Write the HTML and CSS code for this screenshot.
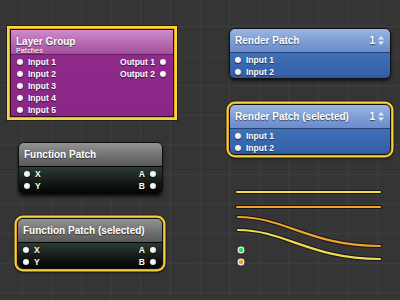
FILE: index.html
```html
<!DOCTYPE html>
<html>
<head>
<meta charset="utf-8">
<link rel="stylesheet" href="styles.css">
</head>
<body>
<div class="canvas">
  <div class="node purple sel-square n-layer">
    <div class="head">
      <div class="title">Layer Group</div>
      <div class="sub">Patches</div>
    </div>
    <div class="body">
      <ul class="ports in">
        <li><span class="dot"></span>Input 1</li>
        <li><span class="dot"></span>Input 2</li>
        <li><span class="dot"></span>Input 3</li>
        <li><span class="dot"></span>Input 4</li>
        <li><span class="dot"></span>Input 5</li>
      </ul>
      <ul class="ports out">
        <li>Output 1<span class="dot"></span></li>
        <li>Output 2<span class="dot"></span></li>
      </ul>
    </div>
  </div>

  <div class="node blue n-render">
    <div class="head row">
      <div class="title">Render Patch</div>
      <div class="count">1 <svg class="updown" width="6" height="9" viewBox="0 0 6 9"><path d="M3 0 L6 3.6 L0 3.6 Z M3 9 L6 5.4 L0 5.4 Z"/></svg></div>
    </div>
    <div class="body">
      <ul class="ports in">
        <li><span class="dot"></span>Input 1</li>
        <li><span class="dot"></span>Input 2</li>
      </ul>
    </div>
  </div>

  <div class="node blue selected n-render-sel">
    <div class="head row">
      <div class="title">Render Patch (selected)</div>
      <div class="count">1 <svg class="updown" width="6" height="9" viewBox="0 0 6 9"><path d="M3 0 L6 3.6 L0 3.6 Z M3 9 L6 5.4 L0 5.4 Z"/></svg></div>
    </div>
    <div class="body">
      <ul class="ports in">
        <li><span class="dot"></span>Input 1</li>
        <li><span class="dot"></span>Input 2</li>
      </ul>
    </div>
  </div>

  <div class="node gray n-func">
    <div class="head row">
      <div class="title">Function Patch</div>
    </div>
    <div class="body">
      <ul class="ports in">
        <li><span class="dot"></span>X</li>
        <li><span class="dot"></span>Y</li>
      </ul>
      <ul class="ports out">
        <li>A<span class="dot"></span></li>
        <li>B<span class="dot"></span></li>
      </ul>
    </div>
  </div>

  <div class="node gray selected n-func-sel">
    <div class="head row">
      <div class="title">Function Patch (selected)</div>
    </div>
    <div class="body">
      <ul class="ports in">
        <li><span class="dot"></span>X</li>
        <li><span class="dot"></span>Y</li>
      </ul>
      <ul class="ports out">
        <li>A<span class="dot"></span></li>
        <li>B<span class="dot"></span></li>
      </ul>
    </div>
  </div>

  <svg class="wires" width="400" height="300" viewBox="0 0 400 300">
    <g fill="none" stroke-linecap="round">
      <g stroke="#15151c" stroke-width="4.2">
        <path d="M237 192 H380"/>
        <path d="M237 207 H380"/>
        <path d="M238 217 C285 217 310 246 380 246"/>
        <path d="M238 230 C285 230 310 259 380 259"/>
      </g>
      <path d="M237 192 H380" stroke="#f2dc52" stroke-width="2.2"/>
      <path d="M237 207 H380" stroke="#f2a228" stroke-width="2.2"/>
      <path d="M238 217 C285 217 310 246 380 246" stroke="#f2a228" stroke-width="2.2"/>
      <path d="M238 230 C285 230 310 259 380 259" stroke="#f2dc52" stroke-width="2.2"/>
    </g>
    <circle cx="241" cy="250" r="4" fill="#f4f4f4" stroke="#222" stroke-width="0.8"/>
    <circle cx="241" cy="250" r="2.3" fill="#22dd55"/>
    <circle cx="241" cy="262" r="4" fill="#f4f4f4" stroke="#222" stroke-width="0.8"/>
    <circle cx="241" cy="262" r="2.3" fill="#f0a030"/>
  </svg>
</div>
</body>
</html>
```

FILE: styles.css
```css
* { box-sizing: border-box; }
html, body { margin: 0; padding: 0; }
body { background: #353535; }

.canvas {
  position: relative;
  width: 400px;
  height: 300px;
  overflow: hidden;
  background-color: #353535;
  background-image:
    linear-gradient(to right, #3e3e3e 1px, transparent 1px),
    linear-gradient(to bottom, #3e3e3e 1px, transparent 1px);
  background-size: 29.6px 29.6px;
  background-position: 22px 26px;
  font-family: "Liberation Sans", Arial, sans-serif;
  color: #fff;
}

.node {
  position: absolute;
  display: flex;
  flex-direction: column;
  border: 1px solid #101010;
  border-radius: 6px;
  overflow: hidden;
  box-shadow: 0 2px 3px rgba(0,0,0,0.65);
}

.node.selected {
  overflow: visible;
  box-shadow: 0 0 0 1px #e9a222, 0 0 0 2.5px #f3d23e, 0 0 0 3.5px rgba(20,20,20,0.7), 0 3px 4px rgba(0,0,0,0.6);
}
.node.selected .head { border-radius: 5px 5px 0 0; }
.node.selected .body { border-radius: 0 0 5px 5px; }

.node.sel-square {
  border-radius: 0;
  border-color: #2a0828;
  box-shadow: 0 0 0 1px #e9a222, 0 0 0 3px #f3d83e, 0 0 0 4px rgba(20,20,20,0.6);
}

.head {
  flex: 0 0 23px;
  padding: 0 6px 0 5px;
  text-shadow: 0 1px 1px rgba(0,0,0,0.55);
}
.head.row {
  display: flex;
  align-items: center;
  justify-content: space-between;
  padding-bottom: 1px;
}
.title {
  font-weight: bold;
  font-size: 10px;
  line-height: 11px;
}
.sub {
  font-weight: bold;
  font-size: 7px;
  line-height: 7px;
  color: #f2e2f2;
}
.count {
  display: flex;
  align-items: center;
  gap: 1px;
  font-weight: bold;
  font-size: 10px;
  line-height: 11px;
}
.updown { fill: #e4ebf6; margin-left: 2px; }

.body {
  flex: 1;
  display: flex;
  justify-content: space-between;
  padding: 1px 6px 0 5px;
  border-top: 1px solid rgba(0,0,0,0.25);
}

.ports {
  list-style: none;
  margin: 0;
  padding: 0;
}
.ports li {
  display: flex;
  align-items: center;
  gap: 5px;
  height: 12px;
  font-weight: bold;
  font-size: 8.5px;
  text-shadow: 0 1px 1px rgba(0,0,0,0.6);
}
.ports.out li { justify-content: flex-end; }

.dot {
  width: 6px;
  height: 6px;
  border-radius: 50%;
  background: radial-gradient(circle at 40% 35%, #ffffff 0%, #f0f0f0 55%, #c8c8c8 100%);
  box-shadow: 0 1px 1px rgba(0,0,0,0.6);
}

/* colour schemes */
.purple .head {
  background: linear-gradient(to bottom, #cc8dca 0%, #b96fb5 45%, #a2509e 100%);
  padding-top: 6px;
}
.purple .body {
  background: linear-gradient(to bottom, #8f2a8b, #8a2786);
  padding-top: 1px;
  padding-left: 6px;
  padding-right: 7px;
}

.blue .head {
  background: linear-gradient(to bottom, #9ab6e4 0%, #7f9fd6 50%, #6a8ccb 100%);
}
.blue .body {
  background: linear-gradient(to bottom, #4070b6, #3562aa 85%, #2f5699);
  padding-top: 1px;
}

.gray .head {
  background: linear-gradient(to bottom, #939393 0%, #747474 50%, #595959 100%);
}
.gray .body {
  background: linear-gradient(to bottom, #2c3a33 0%, #121915 60%, #030403 100%);
}

/* diagram node positions */
.n-layer { left: 10px; top: 29px; width: 164px; height: 88px; }
.n-render { left: 229px; top: 28px; width: 162px; height: 51px; }
.n-render-sel { left: 229px; top: 104px; width: 162px; height: 51px; }
.n-func { left: 18px; top: 142px; width: 145px; height: 53px; }
.n-func-sel { left: 17px; top: 218px; width: 146px; height: 51px; }

.wires {
  position: absolute;
  left: 0;
  top: 0;
}
```
